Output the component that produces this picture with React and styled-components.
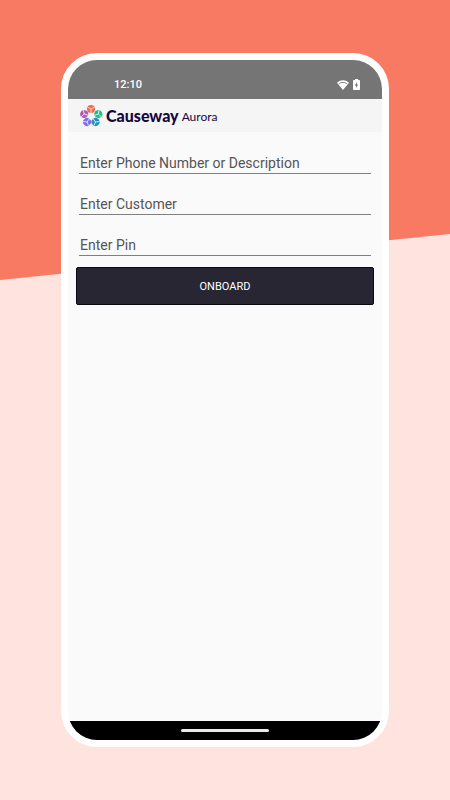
import React, { useState } from "react";
import styled, { createGlobalStyle } from "styled-components";

const GlobalStyle = createGlobalStyle`
  * {
    box-sizing: border-box;
  }

  body {
    margin: 0;
    font-family: Roboto, "Liberation Sans", sans-serif;
  }
`;

const Page = styled.div`
  position: relative;
  display: flex;
  min-height: 100vh;
  padding: 53px 61px;
  background: #fee3df;

  &::before {
    content: "";
    position: absolute;
    top: 0;
    left: 0;
    width: 100%;
    height: 280px;
    background: #f97a62;
    clip-path: polygon(0 0, 100% 0, 100% 234px, 0 100%);
  }
`;

const Phone = styled.div`
  position: relative;
  display: flex;
  flex: 1;
  flex-direction: column;
  border: 7px solid white;
  border-radius: 36px;
  background: #fafafa;
  overflow: hidden;
`;

const StatusBar = styled.div`
  display: flex;
  align-items: center;
  justify-content: space-between;
  height: 39px;
  padding: 10px 22px 0 46px;
  background: #757575;
  color: white;
`;

const Time = styled.span`
  font-size: 11px;
  font-weight: 500;
  line-height: 14px;
`;

const StatusIcons = styled.div`
  display: flex;
  align-items: center;
  gap: 4px;

  svg {
    display: block;
  }
`;

const Header = styled.header`
  display: flex;
  align-items: center;
  height: 33px;
  padding: 0 12px;
  background: #f5f5f5;
  color: #16083f;

  svg {
    margin-right: 3px;
  }
`;

const Brand = styled.span`
  font-family: Lato, sans-serif;
  font-size: 16px;
  font-weight: 900;
  line-height: 20px;
`;

const Product = styled.span`
  margin: 2px 0 0 3px;
  font-family: Lato, sans-serif;
  font-size: 12px;
  line-height: 18px;
`;

const Form = styled.form`
  display: flex;
  flex: 1;
  flex-direction: column;
  padding: 15px 8px;
`;

const Field = styled.input`
  height: 27px;
  margin: 0 3px 14px;
  padding: 5px 0 0 1px;
  border: 0;
  border-bottom: 1px solid #808080;
  border-radius: 0;
  outline: none;
  background: transparent;
  color: #222;
  font-family: inherit;
  font-size: 14px;

  &::placeholder {
    color: #555;
    opacity: 1;
  }
`;

const SubmitButton = styled.button`
  height: 38px;
  margin-top: -3px;
  border: 1px solid #08080f;
  border-radius: 2px;
  background: #272632;
  color: white;
  font-family: inherit;
  font-size: 11px;
  cursor: pointer;
`;

const NavBar = styled.div`
  display: flex;
  align-items: center;
  justify-content: center;
  height: 19px;
  background: black;
`;

const HomeHandle = styled.div`
  width: 28%;
  height: 3px;
  border-radius: 2px;
  background: #eee8ea;
`;

const petals = [
  { x: 11, y: 5, color: "#f4694f", turn: 0 },
  { x: 18.3, y: 10, color: "#16c08f", turn: 72 },
  { x: 15.5, y: 18, color: "#1b93c6", turn: 144 },
  { x: 7, y: 18, color: "#7c6cf0", turn: 216 },
  { x: 4.2, y: 10, color: "#b05bb0", turn: 288 },
];

function Logo() {
  return (
    <svg width="23" height="23" viewBox="0 0 23 23" aria-hidden="true">
      {petals.map(({ x, y, color, turn }) => (
        <g key={color} transform={`translate(${x} ${y}) rotate(${turn})`}>
          <circle r="4" fill={color} />
          <path
            d="M0 0V4M0 0L-3.5 -2M0 0L3.5 -2"
            stroke="#f5f5f5"
            strokeWidth="0.8"
          />
        </g>
      ))}
    </svg>
  );
}

function WifiIcon() {
  return (
    <svg width="12" height="10" viewBox="0 0 12 10" aria-hidden="true">
      <path d="M0 2.7C3.5 -.6 8.5 -.6 12 2.7L6 10Z" fill="white" />
      <path
        d="M1.7 4C4.3 1.9 7.7 1.9 10.3 4"
        fill="none"
        stroke="#757575"
        strokeWidth="0.9"
      />
    </svg>
  );
}

function BatteryIcon() {
  return (
    <svg width="7" height="11" viewBox="0 0 7 11" aria-hidden="true">
      <path
        d="M2 0H5V1H6.2Q7 1 7 1.8V10.2Q7 11 6.2 11H.8Q0 11 0 10.2V1.8Q0 1 .8 1H2Z"
        fill="white"
      />
      <path d="M3.9 3L1.8 6.4H3.2V9L5.2 5.6H3.9Z" fill="#757575" />
    </svg>
  );
}

const fields = [
  { name: "device", label: "Enter Phone Number or Description", type: "text" },
  { name: "customer", label: "Enter Customer", type: "text" },
  { name: "pin", label: "Enter Pin", type: "password" },
];

function App() {
  const [values, setValues] = useState({ device: "", customer: "", pin: "" });

  const onChange = (e) => {
    const { name, value } = e.target;
    setValues({ ...values, [name]: value });
  };

  const onSubmit = (e) => {
    e.preventDefault();
  };

  return (
    <>
      <GlobalStyle />
      <Page>
        <Phone>
          <StatusBar>
            <Time>12:10</Time>
            <StatusIcons>
              <WifiIcon />
              <BatteryIcon />
            </StatusIcons>
          </StatusBar>
          <Header>
            <Logo />
            <Brand>Causeway</Brand>
            <Product>Aurora</Product>
          </Header>
          <Form onSubmit={onSubmit}>
            {fields.map(({ name, label, type }) => (
              <Field
                key={name}
                name={name}
                type={type}
                placeholder={label}
                aria-label={label}
                value={values[name]}
                onChange={onChange}
              />
            ))}
            <SubmitButton type="submit">ONBOARD</SubmitButton>
          </Form>
          <NavBar>
            <HomeHandle />
          </NavBar>
        </Phone>
      </Page>
    </>
  );
}

export default App;
